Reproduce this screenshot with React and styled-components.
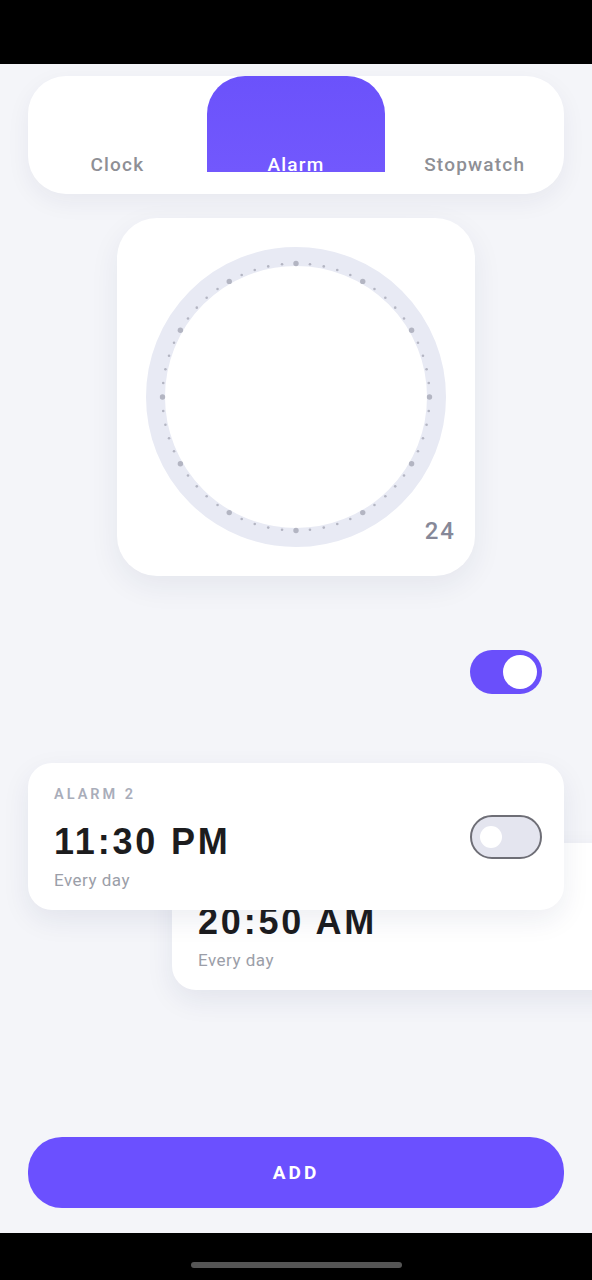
import React from "react";
import styled, { createGlobalStyle } from "styled-components";

const GlobalStyle = createGlobalStyle`
  body {
    margin: 0;
    background: #000;
    font-family: Roboto, "Liberation Sans", sans-serif;
  }
`;

const Screen = styled.div`
  width: 592px;
  height: 1280px;
  display: flex;
  flex-direction: column;
  overflow: hidden;
  background: #000;
`;

const StatusBar = styled.div`
  height: 64px;
  flex: none;
  background: #000;
`;

const Main = styled.div`
  flex: 1;
  background: #f4f5f9;
  display: flex;
  flex-direction: column;
  padding: 12px 28px 25px;
  box-sizing: border-box;
`;

const TabBar = styled.div`
  height: 118px;
  background: #fff;
  border-radius: 38px;
  display: grid;
  grid-template-columns: repeat(3, 1fr);
  align-items: start;
  box-shadow: 0 8px 24px rgba(30, 40, 90, 0.06);
`;

const Tab = styled.div`
  height: 96px;
  display: flex;
  justify-content: center;
  align-items: flex-end;
  border-radius: 38px 38px 0 0;
  background: ${(p) => (p.$active ? "linear-gradient(#6b52fb, #7258fd)" : "transparent")};
`;

const TabLabel = styled.span`
  font-size: 19px;
  font-weight: 500;
  line-height: 22px;
  letter-spacing: 1.2px;
  margin-bottom: -4px;
  color: ${(p) => (p.$active ? "#fff" : "#8e8f95")};
`;

const DialCard = styled.div`
  position: relative;
  align-self: center;
  margin-top: 24px;
  width: 358px;
  height: 358px;
  background: #fff;
  border-radius: 40px;
  display: flex;
  align-items: center;
  justify-content: center;
  box-shadow: 0 10px 30px rgba(30, 40, 90, 0.07);
`;

const DialNumber = styled.span`
  position: absolute;
  right: 19px;
  bottom: 31px;
  font-size: 24px;
  font-weight: 500;
  letter-spacing: 2px;
  color: #868898;
`;

const ToggleRow = styled.div`
  margin-top: 74px;
  display: flex;
  justify-content: flex-end;
  padding-right: 22px;
`;

const Switch = styled.div`
  width: 72px;
  height: 44px;
  box-sizing: border-box;
  border-radius: 22px;
  display: flex;
  align-items: center;
  justify-content: ${(p) => (p.$on ? "flex-end" : "flex-start")};
  padding: ${(p) => (p.$on ? "0 5px" : "0 8px")};
  background: ${(p) => (p.$on ? "#6a4ffb" : "#e4e5ef")};
  border: ${(p) => (p.$on ? "none" : "2.5px solid #6e6e76")};
`;

const Knob = styled.div`
  width: ${(p) => (p.$on ? "34px" : "22px")};
  height: ${(p) => (p.$on ? "34px" : "22px")};
  border-radius: 50%;
  background: #fff;
`;

const CardStack = styled.div`
  margin-top: 69px;
  display: flex;
  flex-direction: column;
`;

const AlarmCard = styled.div`
  position: relative;
  z-index: ${(p) => p.$layer};
  width: 536px;
  height: 147px;
  flex: none;
  box-sizing: border-box;
  background: #fff;
  border-radius: 24px;
  padding: 22px 22px 0 26px;
  display: flex;
  align-items: flex-start;
  justify-content: space-between;
  box-shadow: 0 10px 28px rgba(30, 40, 90, 0.08);
  margin-top: ${(p) => (p.$behind ? "-67px" : "0")};
  margin-left: ${(p) => (p.$behind ? "144px" : "0")};
`;

const AlarmInfo = styled.div`
  display: flex;
  flex-direction: column;
`;

const AlarmLabel = styled.div`
  font-size: 14.5px;
  font-weight: 600;
  letter-spacing: 3px;
  line-height: 20px;
  color: #a9adba;
`;

const AlarmTime = styled.div`
  margin-top: 19px;
  font-family: "Liberation Sans", Arial, sans-serif;
  font-weight: 700;
  font-size: 36px;
  line-height: 36px;
  letter-spacing: 2.8px;
  color: #1c1c1e;
`;

const AlarmRepeat = styled.div`
  margin-top: 10px;
  font-size: 17px;
  letter-spacing: 0.5px;
  color: #9b9ea8;
`;

const SwitchSlot = styled.div`
  margin-top: 30px;
`;

const AddButton = styled.button`
  margin-top: auto;
  height: 71px;
  width: 100%;
  border: none;
  border-radius: 34px;
  background: #6b50ff;
  color: #fff;
  font-family: Roboto, "Liberation Sans", sans-serif;
  font-size: 19px;
  font-weight: 700;
  letter-spacing: 3px;
`;

const HomeBar = styled.div`
  height: 47px;
  flex: none;
  background: #000;
  display: flex;
  justify-content: center;
  align-items: flex-start;
  padding-top: 29px;
  box-sizing: border-box;
`;

const HomeIndicator = styled.div`
  width: 211px;
  height: 6px;
  border-radius: 3px;
  background: #555;
`;

function Dial() {
  const cx = 150;
  const dots = [];
  for (let i = 0; i < 60; i++) {
    const a = (i / 60) * Math.PI * 2;
    const big = i % 5 === 0;
    dots.push(
      <circle
        key={i}
        cx={cx + Math.sin(a) * 133.5}
        cy={cx - Math.cos(a) * 133.5}
        r={big ? 2.7 : 1.3}
        fill="#b3b5c2"
      />
    );
  }
  return (
    <svg width="300" height="300" viewBox="0 0 300 300">
      <circle cx={cx} cy={cx} r="140.5" fill="none" stroke="#e8eaf4" strokeWidth="19" />
      {dots}
    </svg>
  );
}

const tabs = ["Clock", "Alarm", "Stopwatch"];

const alarms = [
  { label: "ALARM 2", time: "11:30 PM", repeat: "Every day", on: false },
  { label: "ALARM 1", time: "20:50 AM", repeat: "Every day", on: true },
];

export default function App() {
  return (
    <Screen>
      <GlobalStyle />
      <StatusBar />
      <Main>
        <TabBar>
          {tabs.map((t) => (
            <Tab key={t} $active={t === "Alarm"}>
              <TabLabel $active={t === "Alarm"}>{t}</TabLabel>
            </Tab>
          ))}
        </TabBar>

        <DialCard>
          <Dial />
          <DialNumber>24</DialNumber>
        </DialCard>

        <ToggleRow>
          <Switch $on>
            <Knob $on />
          </Switch>
        </ToggleRow>

        <CardStack>
          {alarms.map((a, i) => (
            <AlarmCard key={a.label} $behind={i > 0} $layer={alarms.length - i}>
              <AlarmInfo>
                <AlarmLabel>{a.label}</AlarmLabel>
                <AlarmTime>{a.time}</AlarmTime>
                <AlarmRepeat>{a.repeat}</AlarmRepeat>
              </AlarmInfo>
              <SwitchSlot>
                <Switch $on={a.on}>
                  <Knob $on={a.on} />
                </Switch>
              </SwitchSlot>
            </AlarmCard>
          ))}
        </CardStack>

        <AddButton>ADD</AddButton>
      </Main>
      <HomeBar>
        <HomeIndicator />
      </HomeBar>
    </Screen>
  );
}
